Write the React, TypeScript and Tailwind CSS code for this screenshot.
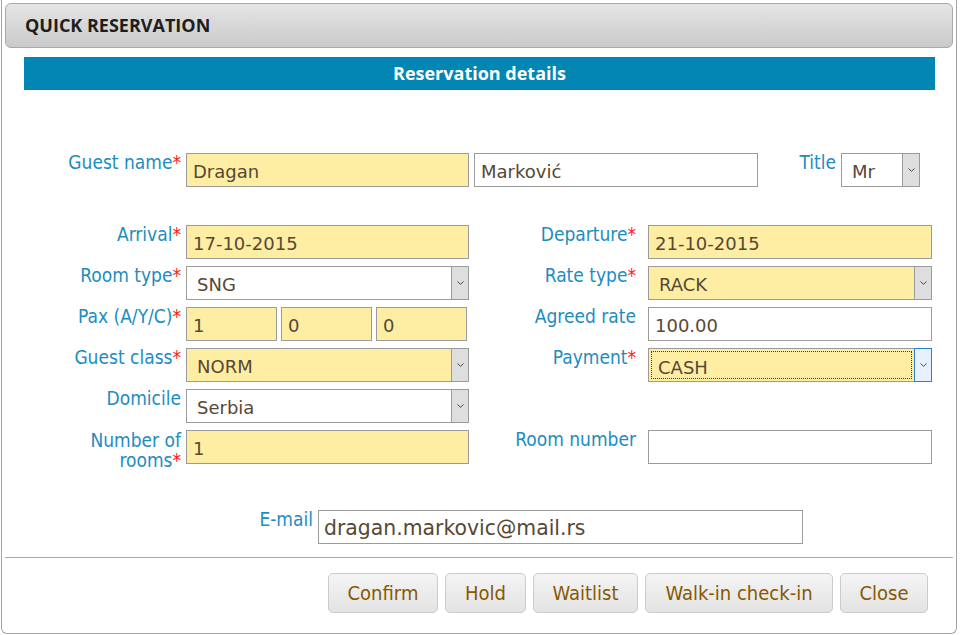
import React from 'react';

const LABEL =
  "text-right text-[#1d8cc0] text-[19px] leading-[19px] font-['DejaVu_Sans_Condensed','DejaVu_Sans',sans-serif] [font-stretch:condensed]";
const FIELD_TEXT = "text-[18px] leading-[21px] text-[#574834] font-['DejaVu_Sans',Verdana,sans-serif]";

const Star = () => <span className="text-[#ff1a1a]">*</span>;

const Chevron: React.FC = () => (
  <svg width="9" height="6" viewBox="0 0 9 6" fill="none">
    <path d="M1.5 1.5 L4.5 4.3 L7.5 1.5" stroke="#4a4a4a" strokeWidth="1" />
  </svg>
);

type BoxProps = { value?: string; yellow?: boolean; className?: string };

const Box: React.FC<BoxProps> = ({ value, yellow, className = '' }) => (
  <div
    className={`h-[34px] shrink-0 border border-[#9b9b9b] pl-[6px] pt-[7px] ${FIELD_TEXT} ${
      yellow ? 'bg-[#fdeea4]' : 'bg-white'
    } ${className}`}
  >
    {value}
  </div>
);

type SelectProps = { value: string; yellow?: boolean; focused?: boolean; className?: string };

const Select: React.FC<SelectProps> = ({ value, yellow, focused, className = '' }) => (
  <div
    className={`flex h-[34px] shrink-0 border border-[#9b9b9b] ${yellow ? 'bg-[#fdeea4]' : 'bg-white'} ${className}`}
  >
    {focused ? (
      <div className={`m-[2px] flex-1 border border-dotted border-[#3a3a3a] pl-[6px] pt-[5px] ${FIELD_TEXT}`}>
        {value}
      </div>
    ) : (
      <div className={`flex-1 pl-[10px] pt-[7px] ${FIELD_TEXT}`}>{value}</div>
    )}
    {focused ? (
      <div className="-my-px -mr-px flex w-[18px] items-center justify-center border border-[#2a7fd5] bg-[#e6f1fb]">
        <Chevron />
      </div>
    ) : (
      <div className="flex w-[17px] items-center justify-center border-l border-[#9b9b9b] bg-[#dedede]">
        <Chevron />
      </div>
    )}
  </div>
);

const Btn: React.FC<{ label: string; w: string }> = ({ label, w }) => (
  <button
    className={`${w} h-[40px] rounded-[5px] border border-[#cbcbcb] bg-gradient-to-b from-[#f4f4f4] to-[#e3e3e3] text-[20px] text-[#875900] font-['DejaVu_Sans_Condensed','DejaVu_Sans',sans-serif] [font-stretch:condensed]`}
  >
    {label}
  </button>
);

export default function App() {
  return (
    <div className="h-[635px] w-[960px] overflow-hidden bg-white">
      <div className="ml-[1px] flex w-[956px] flex-col rounded-b-[6px] border-x border-b border-[#a3a3a3] bg-white pb-[20px]">
        {/* title bar */}
        <div className="mx-[3px] mt-[3px] flex h-[45px] items-center rounded-[6px] border border-[#a8a8a8] bg-gradient-to-b from-[#e5e5e5] to-[#cacaca] pl-[19px]">
          <span className="text-[18px] font-bold text-[#1e1e1e] font-['Open_Sans',sans-serif]">QUICK RESERVATION</span>
        </div>

        {/* section header */}
        <div className="ml-[22px] mt-[9px] flex h-[33px] w-[911px] items-center justify-center bg-[#0386b3]">
          <span className="text-[18px] font-bold text-white font-['Open_Sans',sans-serif]">Reservation details</span>
        </div>

        {/* form */}
        <div className="mt-[63px] flex h-[34px]">
          <div className={`w-[179px] ${LABEL}`}>
            Guest name<Star />
          </div>
          <Box value="Dragan" yellow className="ml-[5px] w-[283px]" />
          <Box value="Marković" className="ml-[5px] w-[284px]" />
          <div className={`w-[78px] ${LABEL}`}>Title</div>
          <Select value="Mr" className="ml-[5px] w-[79px]" />
        </div>

        <div className="mt-[38px] flex h-[34px]">
          <div className={`w-[179px] ${LABEL}`}>
            Arrival<Star />
          </div>
          <Box value="17-10-2015" yellow className="ml-[5px] w-[283px]" />
          <div className={`w-[167px] ${LABEL}`}>
            Departure<Star />
          </div>
          <Box value="21-10-2015" yellow className="ml-[12px] w-[284px]" />
        </div>

        <div className="mt-[7px] flex h-[34px]">
          <div className={`w-[179px] ${LABEL}`}>
            Room type<Star />
          </div>
          <Select value="SNG" className="ml-[5px] w-[283px]" />
          <div className={`w-[167px] ${LABEL}`}>
            Rate type<Star />
          </div>
          <Select value="RACK" yellow className="ml-[12px] w-[284px]" />
        </div>

        <div className="mt-[7px] flex h-[34px]">
          <div className={`w-[179px] ${LABEL}`}>
            Pax (A/Y/C)<Star />
          </div>
          <div className="ml-[5px] flex w-[283px] gap-[4px]">
            <Box value="1" yellow className="w-[91px]" />
            <Box value="0" yellow className="w-[91px]" />
            <Box value="0" yellow className="w-[91px]" />
          </div>
          <div className={`w-[167px] ${LABEL}`}>Agreed rate</div>
          <Box value="100.00" className="ml-[12px] w-[284px]" />
        </div>

        <div className="mt-[7px] flex h-[34px]">
          <div className={`w-[179px] ${LABEL}`}>
            Guest class<Star />
          </div>
          <Select value="NORM" yellow className="ml-[5px] w-[283px]" />
          <div className={`w-[167px] ${LABEL}`}>
            Payment<Star />
          </div>
          <Select value="CASH" yellow focused className="ml-[12px] w-[284px]" />
        </div>

        <div className="mt-[7px] flex h-[34px]">
          <div className={`w-[179px] ${LABEL}`}>Domicile</div>
          <Select value="Serbia" className="ml-[5px] w-[283px]" />
        </div>

        <div className="mt-[7px] flex h-[34px]">
          <div className={`w-[179px] ${LABEL} leading-[20px]`}>
            Number of
            <br />
            rooms<Star />
          </div>
          <Box value="1" yellow className="ml-[5px] w-[283px]" />
          <div className={`w-[167px] ${LABEL}`}>Room number</div>
          <Box className="ml-[12px] w-[284px]" />
        </div>

        <div className="mt-[46px] flex h-[34px]">
          <div className={`w-[311px] ${LABEL}`}>E-mail</div>
          <div className="ml-[5px] h-[34px] w-[485px] border border-[#9b9b9b] bg-white pl-[5px] pt-[6px] text-[20.4px] leading-[23px] text-[#574834] font-['DejaVu_Sans',Verdana,sans-serif]">
            dragan.markovic@mail.rs
          </div>
        </div>

        <div className="mx-[3px] mt-[13px] h-px bg-[#aaaaaa]" />

        <div className="mt-[15px] flex justify-end gap-[7px] pr-[28px]">
          <Btn label="Confirm" w="w-[110px]" />
          <Btn label="Hold" w="w-[81px]" />
          <Btn label="Waitlist" w="w-[105px]" />
          <Btn label="Walk-in check-in" w="w-[188px]" />
          <Btn label="Close" w="w-[88px]" />
        </div>
      </div>
    </div>
  );
}
